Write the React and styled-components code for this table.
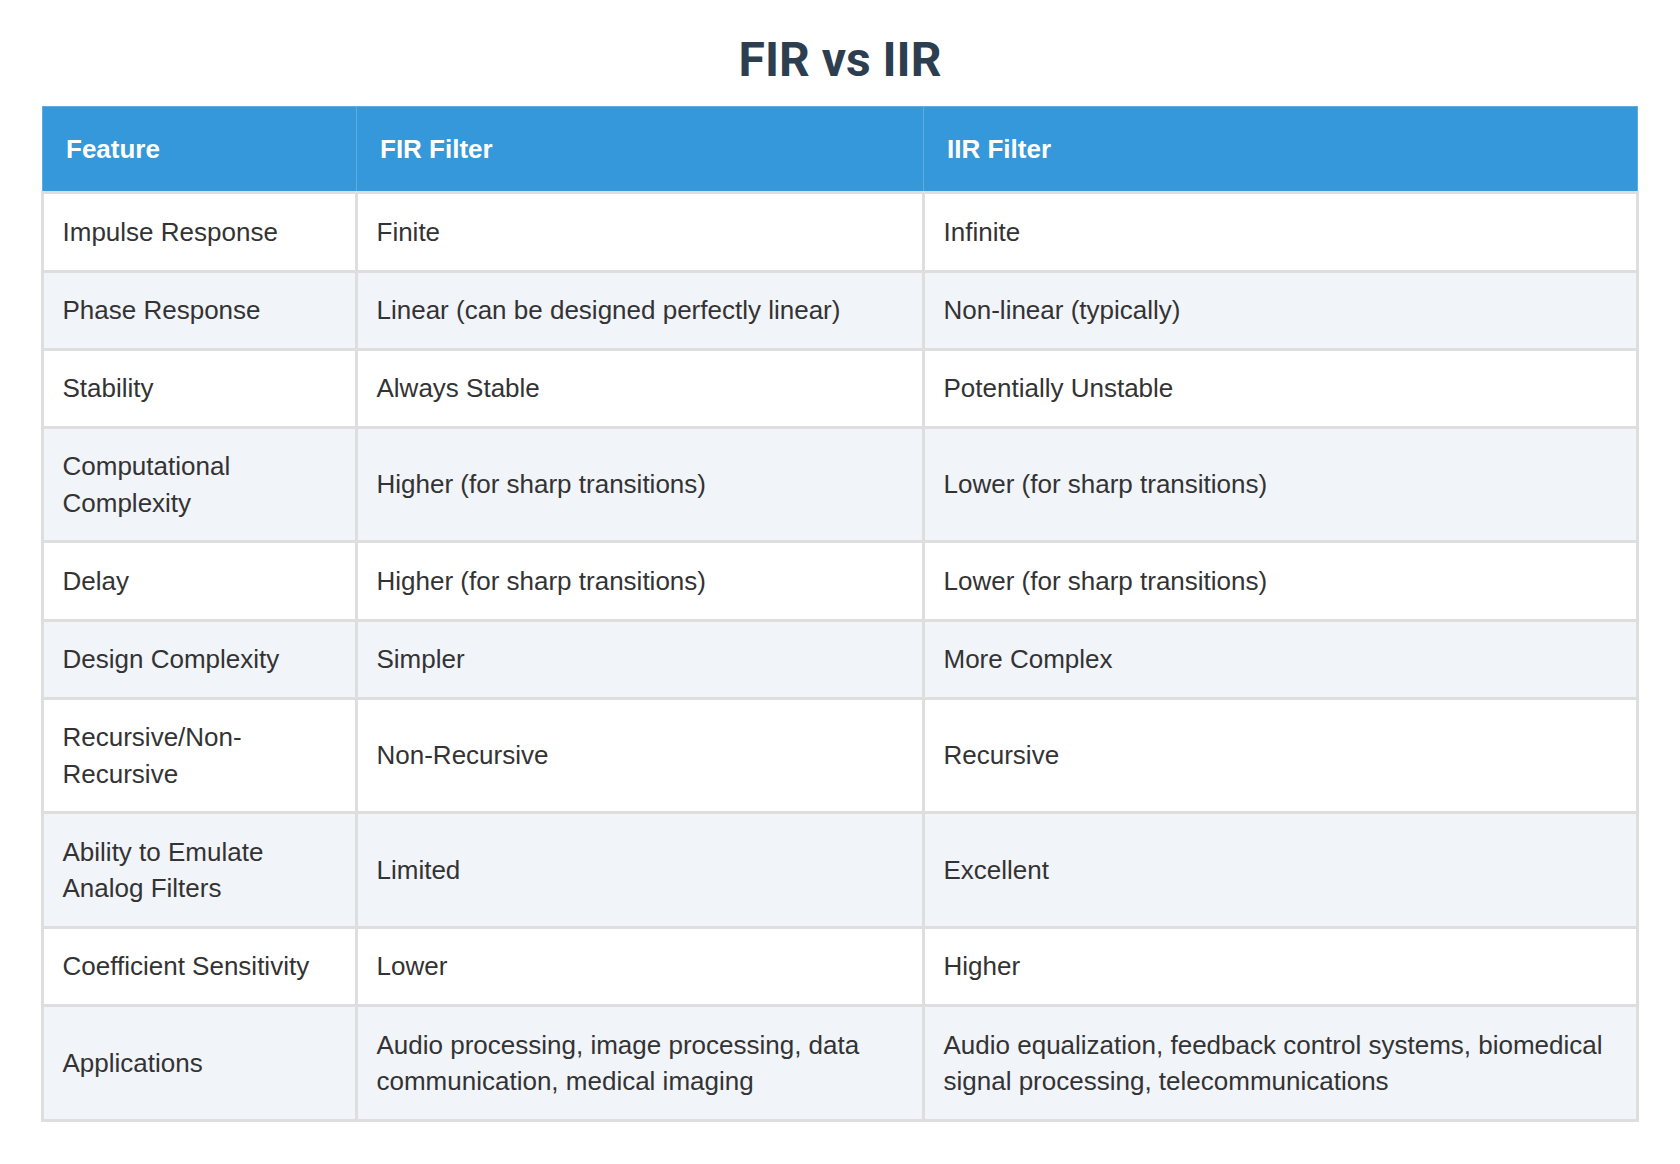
import React from 'react';
import styled, { createGlobalStyle } from 'styled-components';

const GlobalStyle = createGlobalStyle`
  html, body {
    margin: 0;
    padding: 0;
    background: #ffffff;
  }
`;

const rows = [
  ['Impulse Response', 'Finite', 'Infinite'],
  ['Phase Response', 'Linear (can be designed perfectly linear)', 'Non-linear (typically)'],
  ['Stability', 'Always Stable', 'Potentially Unstable'],
  ['Computational Complexity', 'Higher (for sharp transitions)', 'Lower (for sharp transitions)'],
  ['Delay', 'Higher (for sharp transitions)', 'Lower (for sharp transitions)'],
  ['Design Complexity', 'Simpler', 'More Complex'],
  ['Recursive/Non-Recursive', 'Non-Recursive', 'Recursive'],
  ['Ability to Emulate Analog Filters', 'Limited', 'Excellent'],
  ['Coefficient Sensitivity', 'Lower', 'Higher'],
  [
    'Applications',
    'Audio processing, image processing, data communication, medical imaging',
    'Audio equalization, feedback control systems, biomedical signal processing, telecommunications',
  ],
];

const App = () => {
  return (
    <Page>
      <GlobalStyle />
      <Title>FIR vs IIR</Title>
      <Table>
        <colgroup>
          <col style={{ width: '314px' }} />
          <col style={{ width: '567px' }} />
          <col />
        </colgroup>
        <thead>
          <tr>
            <HeadCell>Feature</HeadCell>
            <HeadCell>FIR Filter</HeadCell>
            <HeadCell>IIR Filter</HeadCell>
          </tr>
        </thead>
        <tbody>
          {rows.map((row, i) => (
            <Row key={row[0]} $striped={i % 2 === 1}>
              {row.map((text) => (
                <Cell key={text}>{text}</Cell>
              ))}
            </Row>
          ))}
        </tbody>
      </Table>
    </Page>
  );
};

export default App;

const Page = styled.div`
  padding: 31px 41px 44px;
  font-family: 'Liberation Sans', Arial, sans-serif;
  color: #333333;
`;

const Title = styled.h1`
  margin: 0 0 17px;
  text-align: center;
  font-family: Roboto, 'Liberation Sans', sans-serif;
  font-size: 48px;
  font-weight: 700;
  line-height: 58px;
  color: #2c3e50;
`;

const Table = styled.table`
  width: 100%;
  table-layout: fixed;
  border-collapse: collapse;
  font-size: 26px;
  line-height: 1.4;
`;

const HeadCell = styled.th`
  padding: 24px 23px;
  background: #3498db;
  color: #ffffff;
  font-weight: 700;
  text-align: left;
  border: 1px solid #5dade2;
`;

const Row = styled.tr`
  background: ${({ $striped }) => ($striped ? '#f1f4f9' : '#ffffff')};
`;

const Cell = styled.td`
  padding: 19.4px 18.5px;
  border: 3px solid #dedede;
  vertical-align: middle;
  text-align: left;
`;
